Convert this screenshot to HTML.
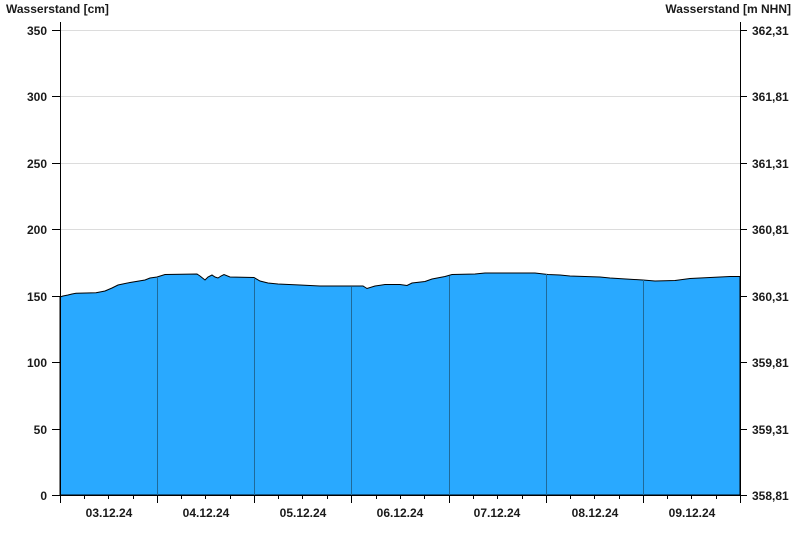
<!DOCTYPE html>
<html><head><meta charset="utf-8"><style>
html,body{margin:0;padding:0;background:#fff;}
svg{display:block;}
text{font-family:"Liberation Sans",Arial,sans-serif;font-size:12px;font-weight:bold;fill:#1a1a1a;}
</style></head><body>
<svg width="800" height="550" viewBox="0 0 800 550" xmlns="http://www.w3.org/2000/svg">
<rect width="800" height="550" fill="#fff"/>
<g stroke="#dcdcdc" stroke-width="1">
<line x1="61" y1="30.5" x2="740" y2="30.5"/>
<line x1="61" y1="96.5" x2="740" y2="96.5"/>
<line x1="61" y1="163.5" x2="740" y2="163.5"/>
<line x1="61" y1="229.5" x2="740" y2="229.5"/>
<line x1="61" y1="296.5" x2="740" y2="296.5"/>
<line x1="61" y1="362.5" x2="740" y2="362.5"/>
<line x1="61" y1="429.5" x2="740" y2="429.5"/>
</g>
<path fill="#29a9ff" stroke="#000" stroke-width="1" d="M60,297 L63,296 L68,295 L72,294 L76,293.3 L96,292.7 L105,291 L112,288 L118,285 L130,282.5 L145,280 L150,278 L157,277 L165,274.5 L197,274 L200,276 L205,280 L208,277 L212,275 L215,277 L218,278 L221,276 L224,274.5 L230,277 L254,277.5 L260,281 L268,283 L278,284 L300,285 L320,286 L335,286 L363,286 L367,288.5 L375,286 L385,284.5 L400,284.5 L407,285.5 L412,283 L425,281.5 L432,279 L445,276.5 L452,274.5 L475,274 L485,273 L535,273 L548,274.5 L560,275 L570,276 L600,277 L610,278 L643,280 L655,281 L675,280.5 L690,278.5 L710,277.5 L730,276.5 L740,276.5 L740,495 L60,495 Z"/>
<g stroke="#1f6a9a" stroke-width="1">
<line x1="157.5" y1="278" x2="157.5" y2="495"/>
<line x1="254.5" y1="278" x2="254.5" y2="495"/>
<line x1="351.5" y1="287" x2="351.5" y2="495"/>
<line x1="449.5" y1="276" x2="449.5" y2="495"/>
<line x1="546.5" y1="274" x2="546.5" y2="495"/>
<line x1="643.5" y1="280" x2="643.5" y2="495"/>
</g>
<g stroke="#000" stroke-width="1">
<line x1="60.5" y1="22" x2="60.5" y2="503"/>
<line x1="740.5" y1="22" x2="740.5" y2="495"/>
<line x1="52" y1="495.5" x2="747" y2="495.5"/>
<line x1="52" y1="30.5" x2="60" y2="30.5"/><line x1="52" y1="96.5" x2="60" y2="96.5"/>
<line x1="52" y1="163.5" x2="60" y2="163.5"/><line x1="52" y1="229.5" x2="60" y2="229.5"/>
<line x1="52" y1="296.5" x2="60" y2="296.5"/><line x1="52" y1="362.5" x2="60" y2="362.5"/>
<line x1="52" y1="429.5" x2="60" y2="429.5"/>
<line x1="741" y1="30.5" x2="747" y2="30.5"/><line x1="741" y1="96.5" x2="747" y2="96.5"/>
<line x1="741" y1="163.5" x2="747" y2="163.5"/><line x1="741" y1="229.5" x2="747" y2="229.5"/>
<line x1="741" y1="296.5" x2="747" y2="296.5"/><line x1="741" y1="362.5" x2="747" y2="362.5"/>
<line x1="741" y1="429.5" x2="747" y2="429.5"/>
<line x1="157.5" y1="495" x2="157.5" y2="503"/><line x1="254.5" y1="495" x2="254.5" y2="503"/>
<line x1="351.5" y1="495" x2="351.5" y2="503"/><line x1="449.5" y1="495" x2="449.5" y2="503"/>
<line x1="546.5" y1="495" x2="546.5" y2="503"/><line x1="643.5" y1="495" x2="643.5" y2="503"/>
<line x1="740.5" y1="495" x2="740.5" y2="503"/>
</g>
<g stroke="#000" stroke-width="1" id="minor">
<line x1="84.5" y1="495" x2="84.5" y2="499"/><line x1="108.5" y1="495" x2="108.5" y2="499"/><line x1="133.5" y1="495" x2="133.5" y2="499"/>
<line x1="181.5" y1="495" x2="181.5" y2="499"/><line x1="205.5" y1="495" x2="205.5" y2="499"/><line x1="230.5" y1="495" x2="230.5" y2="499"/>
<line x1="278.5" y1="495" x2="278.5" y2="499"/><line x1="302.5" y1="495" x2="302.5" y2="499"/><line x1="327.5" y1="495" x2="327.5" y2="499"/>
<line x1="376.5" y1="495" x2="376.5" y2="499"/><line x1="400.5" y1="495" x2="400.5" y2="499"/><line x1="424.5" y1="495" x2="424.5" y2="499"/>
<line x1="473.5" y1="495" x2="473.5" y2="499"/><line x1="497.5" y1="495" x2="497.5" y2="499"/><line x1="522.5" y1="495" x2="522.5" y2="499"/>
<line x1="570.5" y1="495" x2="570.5" y2="499"/><line x1="594.5" y1="495" x2="594.5" y2="499"/><line x1="619.5" y1="495" x2="619.5" y2="499"/>
<line x1="667.5" y1="495" x2="667.5" y2="499"/><line x1="691.5" y1="495" x2="691.5" y2="499"/><line x1="716.5" y1="495" x2="716.5" y2="499"/>
</g>
<text x="6" y="13">Wasserstand [cm]</text>
<text x="791" y="13" text-anchor="end">Wasserstand [m NHN]</text>
<g text-anchor="end">
<text x="47" y="35">350</text><text x="47" y="101">300</text><text x="47" y="168">250</text>
<text x="47" y="234">200</text><text x="47" y="301">150</text><text x="47" y="367">100</text>
<text x="47" y="434">50</text><text x="47" y="500">0</text>
</g>
<g>
<text x="752" y="35">362,31</text><text x="752" y="101">361,81</text><text x="752" y="168">361,31</text>
<text x="752" y="234">360,81</text><text x="752" y="301">360,31</text><text x="752" y="367">359,81</text>
<text x="752" y="434">359,31</text><text x="752" y="500">358,81</text>
</g>
<g text-anchor="middle">
<text x="109" y="517">03.12.24</text><text x="206" y="517">04.12.24</text><text x="303" y="517">05.12.24</text>
<text x="400" y="517">06.12.24</text><text x="497" y="517">07.12.24</text><text x="595" y="517">08.12.24</text>
<text x="692" y="517">09.12.24</text>
</g>
</svg>
</body></html>
